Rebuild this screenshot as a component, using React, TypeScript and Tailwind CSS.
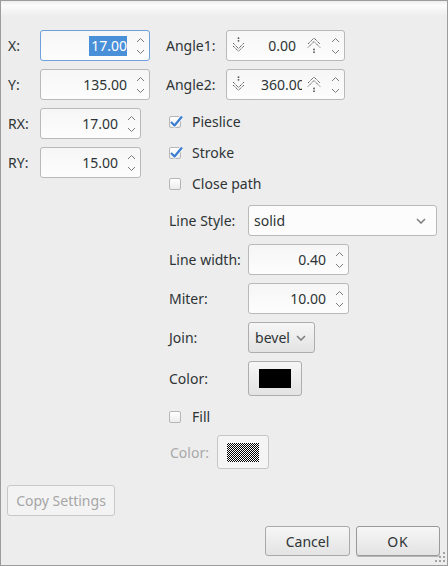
import React from "react";

const SpinArrows = () => (
  <svg width="9" height="18" viewBox="0 0 9 18" className="shrink-0">
    <polyline points="1,5 4.5,1.5 8,5" fill="none" stroke="#7b7b7b" strokeWidth="1" />
    <polyline points="1,13 4.5,16.5 8,13" fill="none" stroke="#7b7b7b" strokeWidth="1" />
  </svg>
);

const DotDown = () => (
  <svg width="13" height="15" viewBox="0 0 13 15" className="shrink-0">
    <circle cx="6.5" cy="1.2" r="0.9" fill="#555" />
    <circle cx="6.5" cy="3.8" r="0.9" fill="#555" />
    <polyline points="1,6 6.5,11.5 12,6" fill="none" stroke="#4e4e4e" strokeWidth="1" strokeDasharray="1.3 0.7" />
    <polyline points="1,9 6.5,14.2 12,9" fill="none" stroke="#4e4e4e" strokeWidth="1" strokeDasharray="1.3 0.7" />
  </svg>
);

const DotUp = () => (
  <svg width="14" height="17" viewBox="0 0 14 17" className="shrink-0">
    <polyline points="1,7 7,1 13,7" fill="none" stroke="#4e4e4e" strokeWidth="1" strokeDasharray="1.3 0.7" />
    <polyline points="1,10.5 7,4.5 13,10.5" fill="none" stroke="#4e4e4e" strokeWidth="1" strokeDasharray="1.3 0.7" />
    <circle cx="7" cy="12.5" r="0.9" fill="#555" />
    <circle cx="7" cy="15.2" r="0.9" fill="#555" />
  </svg>
);

const Chevron = () => (
  <svg width="10" height="6" viewBox="0 0 10 6">
    <polyline points="1,1 5,5 9,1" fill="none" stroke="#7c7c7c" strokeWidth="1.5" />
  </svg>
);

function SpinBox({ value, w, focused }: { value: string; w: string; focused?: boolean }) {
  return (
    <div
      className={`flex h-[31px] items-center rounded-[3px] border bg-linear-to-b from-[#f6f6f6] to-[#fdfdfd] ${w} ${
        focused ? "border-[#6ea0dc]" : "border-[#b9b9b5]"
      }`}
    >
      <div className="flex flex-1 justify-end pr-[5px]">
        {focused ? (
          <span className="inline-block h-[20px] bg-[#4a90d9] pl-[2px] leading-[20px] text-white">{value}</span>
        ) : (
          <span>{value}</span>
        )}
      </div>
      <div className="flex w-[17px] justify-center">
        <SpinArrows />
      </div>
    </div>
  );
}

function AngleBox({ value, clipped }: { value: string; clipped?: boolean }) {
  return (
    <div className="flex h-[31px] w-[119px] items-center rounded-[3px] border border-[#b9b9b5] bg-linear-to-b from-[#f6f6f6] to-[#fdfdfd]">
      <div className="ml-[5px] flex h-full items-center pb-[2px]">
        <DotDown />
      </div>
      <div
        className={`flex flex-1 overflow-hidden whitespace-nowrap ${
          clipped ? "justify-start pl-[16px]" : "justify-end pr-[6px]"
        }`}
      >
        {value}
      </div>
      <div className="ml-[5px] mr-[6px] flex h-full items-center">
        <DotUp />
      </div>
      <div className="flex w-[17px] justify-center">
        <SpinArrows />
      </div>
    </div>
  );
}

function Check({ label, checked }: { label: string; checked?: boolean }) {
  return (
    <div className="flex h-[31px] items-center pl-[3px]">
      <div className="relative h-[12px] w-[12px] rounded-[2px] border border-[#b6b6b6] bg-linear-to-b from-white to-[#ececec]">
        {checked && (
          <svg width="15" height="14" viewBox="0 0 15 14" className="absolute -left-[1px] -top-[3px]">
            <path d="M2 8 L5.5 11.5 L13 2.5" fill="none" stroke="#ffffff" strokeWidth="4" strokeLinejoin="round" />
            <path d="M2 8 L5.5 11.5 L13 2.5" fill="none" stroke="#3f7fcf" strokeWidth="2.4" strokeLinejoin="round" />
          </svg>
        )}
      </div>
      <span className="ml-[11px]">{label}</span>
    </div>
  );
}

const Row = ({ label, children, h = "h-[31px]", mt = "mt-[8px]" }: { label: string; children: React.ReactNode; h?: string; mt?: string }) => (
  <div className={`flex items-center pl-[3px] ${h} ${mt}`}>
    <span className="w-[79px]">{label}</span>
    {children}
  </div>
);

const btn = "flex items-center justify-center rounded-[3px] border bg-linear-to-b from-[#f6f6f6] to-[#e3e3e3]";

export default function App() {
  return (
    <div className="relative flex h-[566px] w-[448px] flex-col overflow-hidden border border-[#9c9c9c] bg-[#ededed] font-['Noto_Sans',sans-serif] text-[14px] text-[#2e3436]">
      <div className="h-[15px] bg-linear-to-b from-[#ececec] via-[#fcfcfc] via-30% to-[#ededed]" />

      <div className="flex pl-[7px] pt-[14px]">
        <div className="flex w-[142px] flex-col gap-[8px]">
          <div className="flex h-[31px] items-center">
            <span className="w-[32px]">X:</span>
            <SpinBox value="17.00" w="w-[110px]" focused />
          </div>
          <div className="flex h-[31px] items-center">
            <span className="w-[32px]">Y:</span>
            <SpinBox value="135.00" w="w-[110px]" />
          </div>
          <div className="flex h-[31px] items-center">
            <span className="w-[32px]">RX:</span>
            <SpinBox value="17.00" w="w-[101px]" />
          </div>
          <div className="flex h-[31px] items-center">
            <span className="w-[32px]">RY:</span>
            <SpinBox value="15.00" w="w-[101px]" />
          </div>
        </div>

        <div className="ml-[16px] flex flex-col">
          <div className="flex h-[31px] items-center">
            <span className="w-[60px]">Angle1:</span>
            <AngleBox value="0.00" />
          </div>
          <div className="mt-[8px] flex h-[31px] items-center">
            <span className="w-[60px]">Angle2:</span>
            <AngleBox value="360.00" clipped />
          </div>

          <div className="mt-[6px] flex flex-col">
            <Check label="Pieslice" checked />
            <Check label="Stroke" checked />
            <Check label="Close path" />
          </div>

          <Row label="Line Style:" mt="mt-[6px]">
            <div className="flex h-[31px] w-[189px] items-center justify-between rounded-[3px] border border-[#b9b9b5] bg-[#fcfcfc] pl-[5px] pr-[10px]">
              <span>solid</span>
              <Chevron />
            </div>
          </Row>
          <Row label="Line width:">
            <SpinBox value="0.40" w="w-[101px]" />
          </Row>
          <Row label="Miter:">
            <SpinBox value="10.00" w="w-[101px]" />
          </Row>
          <Row label="Join:">
            <div className={`${btn} h-[31px] w-[67px] gap-[6px] border-[#adadad] pr-[2px]`}>
              <span>bevel</span>
              <Chevron />
            </div>
          </Row>
          <Row label="Color:" h="h-[35px]">
            <div className={`${btn} h-[35px] w-[54px] border-[#adadad]`}>
              <div className="h-[19px] w-[32px] bg-black" />
            </div>
          </Row>
          <div className="mt-[5px]">
            <Check label="Fill" />
          </div>
          <div className="mt-[3px] flex h-[34px] items-center pl-[4px] text-[#a9a9a9]">
            <span className="w-[47px]">Color:</span>
            <div className="flex h-[34px] w-[52px] items-center justify-center rounded-[3px] border border-[#c6c6c6] bg-[#f4f4f4]">
              <div className="h-[19px] w-[32px] bg-[repeating-conic-gradient(#000_0_25%,#fff_0_50%)] bg-size-[2px_2px]" />
            </div>
          </div>
        </div>
      </div>

      <div className="mt-[16px] pl-[6px]">
        <div className="flex h-[31px] w-[108px] items-center justify-center rounded-[3px] border border-[#c8c8c8] bg-[#f3f3f3] text-[#a6a6a6]">
          Copy Settings
        </div>
      </div>

      <div className="mt-[10px] flex justify-end gap-[6px] pr-[7px]">
        <div className={`${btn} h-[30px] w-[85px] border-[#a9a9a9]`}>Cancel</div>
        <div className={`${btn} h-[30px] w-[84px] border-[#999999] shadow-[0_1px_0_#b5b5b5]`}>
          <span className="tracking-[1px]">OK</span>
        </div>
      </div>

      <svg width="12" height="12" viewBox="0 0 12 12" className="absolute bottom-[2px] right-[1px]">
        {[
          [9, 1],
          [5, 5],
          [9, 5],
          [1, 9],
          [5, 9],
          [9, 9],
        ].map(([x, y], i) => (
          <rect key={i} x={x} y={y} width="2" height="2" fill="#a4a4a4" />
        ))}
      </svg>
    </div>
  );
}
